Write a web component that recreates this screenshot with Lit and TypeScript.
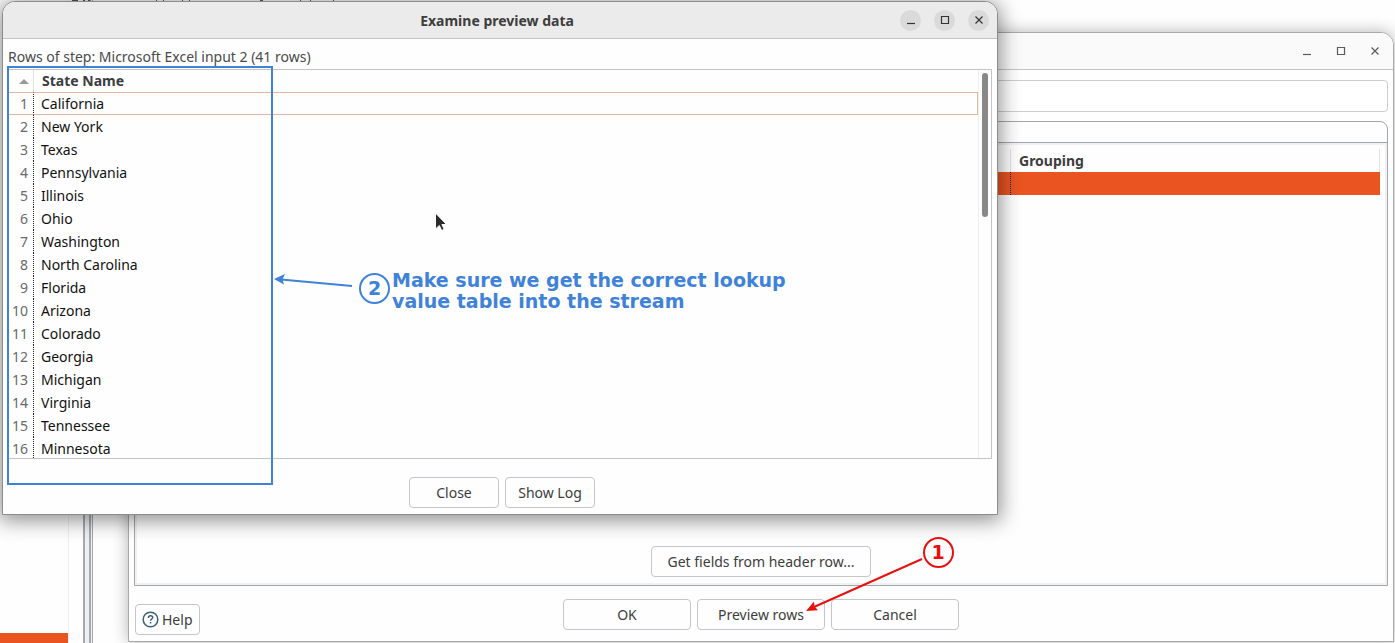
import { LitElement, html, svg, css } from "lit";
import { customElement, property } from "lit/decorators.js";

const STATES = [
  "California", "New York", "Texas", "Pennsylvania", "Illinois", "Ohio",
  "Washington", "North Carolina", "Florida", "Arizona", "Colorado",
  "Georgia", "Michigan", "Virginia", "Tennessee", "Minnesota",
];

const glyphs = {
  minimize: svg`<path d="M5 12.5h8" />`,
  maximize: svg`<path d="M5.5 5.5h7v7h-7z" />`,
  close: svg`<path d="M5.5 5.5l7 7M12.5 5.5l-7 7" />`,
};

/* Minimize, maximize and close buttons of a title bar. */
@customElement("window-controls")
export class WindowControls extends LitElement {
  @property({ type: Boolean, reflect: true }) active = false;

  static styles = css`
    :host {
      display: flex;
      gap: 13px;
    }
    .control {
      width: 21px;
      height: 21px;
      padding: 0;
      border: 0;
      border-radius: 50%;
      background: transparent;
      color: #5a5a5a;
      display: grid;
      place-items: center;
    }
    :host([active]) .control {
      background: #dadada;
      color: #333;
    }
    .glyph {
      width: 18px;
      height: 18px;
      fill: none;
      stroke: currentColor;
      stroke-width: 1.2;
    }
  `;

  render() {
    return html`
      <button class="control" aria-label="Minimize"><svg class="glyph" viewBox="0 0 18 18">${glyphs.minimize}</svg></button>
      <button class="control" aria-label="Maximize"><svg class="glyph" viewBox="0 0 18 18">${glyphs.maximize}</svg></button>
      <button class="control" aria-label="Close"><svg class="glyph" viewBox="0 0 18 18">${glyphs.close}</svg></button>
    `;
  }
}

const shared = css`
  * {
    box-sizing: border-box;
  }
  .button {
    height: 31px;
    padding: 0 8px;
    border: 1px solid #c3c6ca;
    border-radius: 4px;
    background: #fefefe;
    color: #3d3d3d;
    font: inherit;
    white-space: nowrap;
  }
  .titlebar {
    display: flex;
    align-items: center;
    justify-content: flex-end;
    height: 37px;
    padding-right: 8px;
    border-bottom: 1px solid #c4c4c4;
    border-radius: 12px 12px 0 0;
  }
`;

/* The list of rows fetched from the Excel step. */
@customElement("preview-window")
export class PreviewWindow extends LitElement {
  static styles = [shared, css`
    :host {
      display: block;
      border: 1px solid #8c8c8c;
      border-radius: 13px 13px 0 0;
      background: #fefefe;
      box-shadow: 0 3px 20px 3px rgba(0, 0, 0, 0.42);
    }
    .titlebar {
      background: #ebebeb;
      display: grid;
      grid-template-columns: 1fr auto 1fr;
      padding-left: 2px;
    }
    .title {
      grid-column: 2;
      margin: 0;
      padding-top: 2px;
      font-size: 14px;
      font-weight: 700;
      color: #3d3d3d;
    }
    .controls {
      justify-self: end;
    }
    .content {
      padding: 8px 5px 6px;
    }
    .caption {
      margin: 0;
      height: 22px;
      line-height: 20px;
      color: #4a4a4a;
    }
    .list {
      display: flex;
      height: 390px;
      overflow: hidden;
      border: 1px solid #c2c4c6;
    }
    .rows {
      flex: 1;
      border-spacing: 0;
      table-layout: fixed;
    }
    .rows th,
    .rows td {
      height: 23px;
      padding: 0 0 0 7px;
      line-height: 20px;
      text-align: left;
    }
    .rows thead th {
      height: 22px;
      padding-left: 8px;
      color: #3d3d3d;
    }
    .rows .number {
      width: 25px;
      padding: 0 5px 0 0;
      text-align: right;
      font-weight: 400;
      color: #6a6a6a;
      border-right: 1px dotted #222;
    }
    .rows thead .number {
      padding-right: 4px;
      border-right: 1px solid #e2e2e2;
    }
    .rows td {
      color: #111;
    }
    .rows .current > * {
      border-top: 1px solid #dfb9a7;
      border-bottom: 1px solid #dfb9a7;
    }
    .rows .current td {
      border-right: 1px solid #dfb9a7;
    }
    .sort {
      display: block;
      width: 10px;
      height: 5px;
      margin-left: auto;
      fill: #9a9a9a;
    }
    .scroll {
      width: 13px;
      padding: 3px 3px 0 3px;
      border-left: 1px solid #eee;
    }
    .thumb {
      height: 144px;
      width: 6px;
      border-radius: 3px;
      background: #888886;
    }
    .actions {
      display: flex;
      justify-content: center;
      gap: 6px;
      padding: 18px 0 0 4px;
    }
    .actions .button {
      width: 90px;
    }
  `];

  render() {
    return html`
      <header class="titlebar">
        <h1 class="title">Examine preview data</h1>
        <window-controls class="controls" active></window-controls>
      </header>
      <div class="content">
        <p class="caption">Rows of step: Microsoft Excel input 2 (41 rows)</p>
        <div class="list">
          <table class="rows">
            <thead>
              <tr>
                <th class="number" aria-label="Row"><svg class="sort" viewBox="0 0 10 5"><path d="M5 0l5 5H0z" /></svg></th>
                <th>State Name</th>
              </tr>
            </thead>
            <tbody>
              ${STATES.map((name, i) => html`
                <tr class=${i === 0 ? "current" : ""}>
                  <th class="number" scope="row">${i + 1}</th>
                  <td>${name}</td>
                </tr>`)}
            </tbody>
          </table>
          <div class="scroll"><div class="thumb"></div></div>
        </div>
        <div class="actions">
          <button class="button">Close</button>
          <button class="button">Show Log</button>
        </div>
      </div>
    `;
  }
}

/* The step's settings, behind the preview. */
@customElement("step-window")
export class StepWindow extends LitElement {
  static styles = [shared, css`
    :host {
      display: flex;
      flex-direction: column;
      border: 1px solid #a9a9a9;
      border-radius: 13px 13px 0 0;
      background: #fefefe;
      box-shadow: 0 0 16px rgba(0, 0, 0, 0.3);
    }
    .titlebar {
      background: #fafafa;
    }
    .content {
      flex: 1;
      display: flex;
      flex-direction: column;
      padding: 10px 5px 6px;
    }
    .name {
      width: 100%;
      height: 32px;
      border: 1px solid #cbced0;
      border-radius: 4px;
      background: #fff;
      font: inherit;
    }
    .folder {
      flex: 1;
      display: flex;
      flex-direction: column;
      margin-top: 9px;
      border: 1px solid #a3a7aa;
      border-radius: 0 8px 0 0;
    }
    .tabs {
      height: 21px;
      border-bottom: 1px solid #a3a7aa;
    }
    .page {
      flex: 1;
      display: flex;
      flex-direction: column;
      align-items: center;
      justify-content: space-between;
      padding: 4px 5px 6px;
      border: 2px solid #f0f1f2;
    }
    .fields {
      width: 100%;
      border-spacing: 0;
      table-layout: fixed;
    }
    .fields th {
      height: 23px;
      padding: 0 0 0 8px;
      line-height: 20px;
      text-align: left;
      color: #3d3d3d;
      border-right: 1px solid #e4e4e4;
    }
    .fields td {
      height: 23px;
      padding: 0;
      background: #e95420;
    }
    .fields td:first-child {
      border-right: 1px dotted #222;
    }
    .grouping {
      width: 369px;
    }
    .get-fields {
      width: 220px;
    }
    .actions {
      display: grid;
      grid-template-columns: 1fr auto 1fr;
      align-items: start;
      padding-top: 13px;
    }
    .choices {
      display: flex;
      gap: 6px;
    }
    .choices .button {
      width: 128px;
    }
    .help {
      justify-self: start;
      display: flex;
      align-items: center;
      gap: 3px;
      padding: 0 6px;
      margin: 5px 0 0 1px;
    }
    .help-icon {
      width: 17px;
      height: 17px;
      fill: none;
      stroke: #3d5d78;
      stroke-width: 1.5;
    }
  `];

  render() {
    return html`
      <header class="titlebar"><window-controls></window-controls></header>
      <div class="content">
        <input class="name" aria-label="Step name" />
        <div class="folder">
          <div class="tabs"></div>
          <div class="page">
            <table class="fields">
              <thead><tr><th></th><th class="grouping">Grouping</th></tr></thead>
              <tbody><tr><td></td><td></td></tr></tbody>
            </table>
            <button class="button get-fields">Get fields from header row...</button>
          </div>
        </div>
        <div class="actions">
          <button class="button help">
            <svg class="help-icon" viewBox="0 0 17 17">
              <circle cx="8.500" cy="8.500" r="7.300" />
              <path d="M6.400 6.900c0-1.500 1-2.200 2.200-2.200s2.100.8 2.100 1.800c0 1.500-2.100 1.500-2.100 3.200M8.600 11v1.600" />
            </svg>
            Help
          </button>
          <div class="choices">
            <button class="button">OK</button>
            <button class="button">Preview rows</button>
            <button class="button">Cancel</button>
          </div>
        </div>
      </div>
    `;
  }
}

@customElement("app-root")
export class AppRoot extends LitElement {
  static styles = css`
    :host {
      display: block;
      position: relative;
      min-height: 100vh;
      overflow: hidden;
      background: #fefefe;
      font: 14px/20px "Noto Sans", "Open Sans", sans-serif;
    }
    * {
      box-sizing: border-box;
    }
    .desktop {
      display: flex;
      min-height: 100vh;
    }
    .tree {
      width: 69px;
      border-right: 1px solid #eee;
      display: flex;
      align-items: flex-end;
    }
    .selected {
      flex: 1;
      height: 10px;
      background: #e95420;
    }
    .sash {
      width: 10px;
      margin-left: 14px;
      border: solid #a5a9ae;
      border-width: 0 1px 0 2px;
      background: linear-gradient(90deg, #eff0f3 4px, #a5a9ae 4px 6px, #eff0f3 6px);
    }
    .window {
      position: absolute;
    }
    .step {
      left: 128px;
      right: 1px;
      top: 32px;
      bottom: 1px;
    }
    .preview {
      left: 2px;
      right: 397px;
      top: 1px;
    }
    .mark {
      position: absolute;
      pointer-events: none;
      font: 700 19px/21px "DejaVu Sans", sans-serif;
    }
    .toolbar {
      left: 0;
      top: 0;
      width: 340px;
      height: 1px;
      fill: #444;
    }
    .blue {
      color: #3f82da;
    }
    .red {
      color: #ea0f0f;
    }
    .frame {
      left: 7px;
      top: 66px;
      width: 266px;
      height: 419px;
      border: 2px solid #3f82da;
    }
    .arrow {
      fill: currentColor;
      stroke: currentColor;
      stroke-width: 2;
    }
    .arrow-blue {
      left: 273px;
      top: 272px;
      width: 80px;
      height: 18px;
    }
    .arrow-red {
      left: calc(50% + 107px);
      top: 555px;
      width: 120px;
      height: 60px;
    }
    .badge {
      width: 31px;
      height: 31px;
      border: 2px solid currentColor;
      border-radius: 50%;
      display: grid;
      place-items: center;
    }
    .badge-two {
      left: 359px;
      top: 273px;
    }
    .badge-one {
      left: calc(50% + 225px);
      top: 537px;
    }
    .note {
      left: 392px;
      top: 270px;
      margin: 0;
      white-space: nowrap;
    }
    .pointer {
      left: 433px;
      top: 211px;
      width: 16px;
      height: 22px;
      fill: #2b2b2b;
      stroke: #fff;
    }
  `;

  render() {
    return html`
      <div class="desktop">
        <div class="tree"><div class="selected"></div></div>
        <div class="sash"></div>
      </div>
      <step-window class="window step"></step-window>
      <preview-window class="window preview"></preview-window>
      <svg class="mark toolbar" viewBox="0 0 340 1">
        <path d="M72 0h6v1h-6zM83 0h2v1h-2zM88 0h2v1h-2zM156 0h1v1h-1zM163 0h1v1h-1zM182 0h1v1h-1zM189 0h1v1h-1zM260 0h3v1h-3zM300 0h1v1h-1zM310 0h1v1h-1zM333 0h1v1h-1z" />
      </svg>
      <div class="mark frame"></div>
      <svg class="mark blue arrow arrow-blue" viewBox="0 0 80 18">
        <path d="M79 14L8 7.500" />
        <path d="M1 7l11-5-2.500 5.600 1.500 5z" stroke="none" />
      </svg>
      <div class="mark blue badge badge-two">2</div>
      <p class="mark blue note">Make sure we get the correct lookup<br />value table into the stream</p>
      <svg class="mark pointer" viewBox="0 0 16 22">
        <path d="M2.500 2v16l3.800-3.500 2.400 5 2.500-1.200-2.300-4.800h4.600z" />
      </svg>
      <svg class="mark red arrow arrow-red" viewBox="0 0 120 60">
        <path d="M117 4L9 52" />
        <path d="M1 56l8-9.500.5 5 3.500 3.800z" stroke="none" />
      </svg>
      <div class="mark red badge badge-one">1</div>
    `;
  }
}
